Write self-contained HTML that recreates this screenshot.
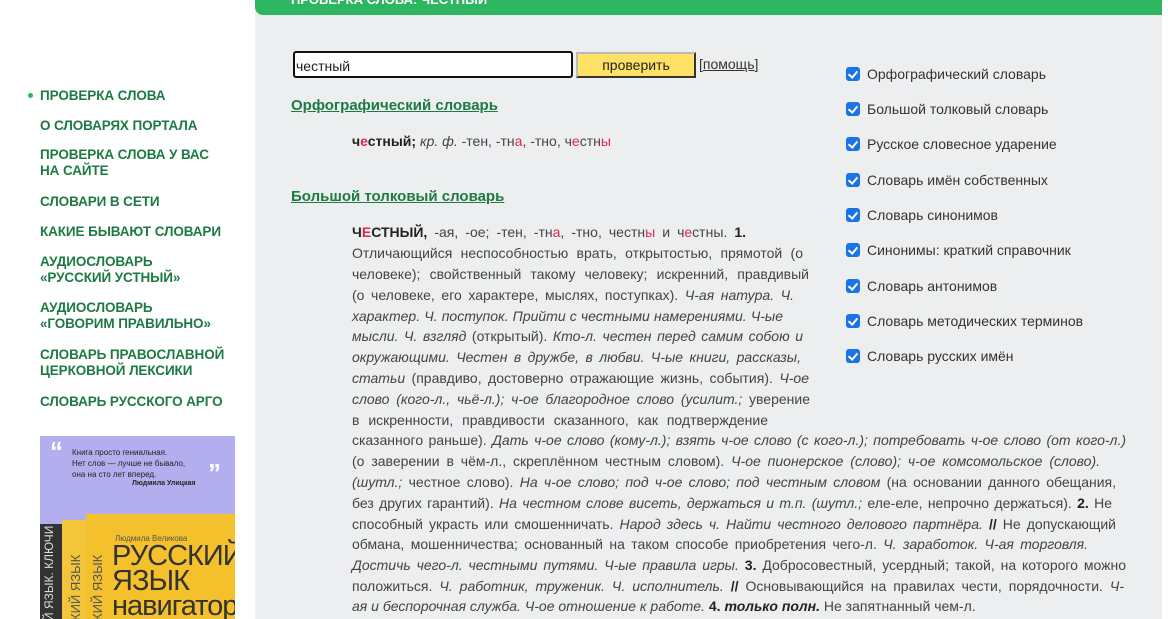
<!DOCTYPE html>
<html><head><meta charset="utf-8">
<style>
*{margin:0;padding:0;box-sizing:border-box}
body{width:1168px;height:619px;overflow:hidden;background:#fff;font-family:"Liberation Sans","DejaVu Sans",sans-serif;position:relative}
.panel{position:absolute;left:255px;top:0;width:907px;height:619px;background:#eceeef}
.bar{position:absolute;left:255px;top:0;width:907px;height:15px;background:#2db55f;border-bottom-left-radius:8px;overflow:hidden}
.bar span{position:absolute;left:36px;top:-8px;color:#fff;font-weight:bold;font-size:13px}
.nav{position:absolute;left:40px;font-weight:bold;font-size:13.5px;color:#1d7a42;line-height:16px;letter-spacing:-0.1px}
.dot{position:absolute;left:28px;top:93px;width:5px;height:5px;border-radius:50%;background:#2db55f}
.inp{position:absolute;left:293px;top:51px;width:280px;height:27px;border:2px solid #111;border-radius:3px;background:#fff;font-size:14px;padding:5px 0 0 1px;color:#222}
.btn{position:absolute;left:576px;top:52px;width:120px;height:26px;background:#ffe166;border:2px solid #333;border-top-color:#bbb;border-left-color:#bbb;font-size:14px;text-align:center;line-height:22px;color:#222}
.help{position:absolute;left:699px;top:56px;font-size:14px;color:#333}
.help u{color:#333}
.h{position:absolute;left:291px;font-weight:bold;font-size:15px;color:#1d7a42;text-decoration:underline}
.t{position:absolute;left:352px;font-size:14px;color:#444;white-space:nowrap;text-align:justify;text-align-last:justify;height:21px;line-height:21px}
.t b{color:#222}
i{font-style:italic}
.r{color:#e0284a}
.cb{position:absolute;left:846px;font-size:14px;color:#333;line-height:16px}
.cb:before{content:"";position:absolute;left:0;top:1px;width:14px;height:14px;background:#1a73e8;border-radius:3px}
.cb:after{content:"";position:absolute;left:4px;top:3px;width:4px;height:7px;border:solid #fff;border-width:0 2px 2px 0;transform:rotate(40deg)}
.cb span{margin-left:21px}
.book{position:absolute;left:40px;top:436px;width:195px;height:183px;background:#b3aeee;overflow:hidden}
</style></head><body>
<div class="panel"></div>
<div class="bar"><span>ПРОВЕРКА СЛОВА: ЧЕСТНЫЙ</span></div>

<div class="dot"></div>
<div class="nav" style="top:88px">ПРОВЕРКА СЛОВА</div>
<div class="nav" style="top:118px">О СЛОВАРЯХ ПОРТАЛА</div>
<div class="nav" style="top:147px">ПРОВЕРКА СЛОВА У ВАС<br>НА САЙТЕ</div>
<div class="nav" style="top:194px">СЛОВАРИ В СЕТИ</div>
<div class="nav" style="top:224px">КАКИЕ БЫВАЮТ СЛОВАРИ</div>
<div class="nav" style="top:254px">АУДИОСЛОВАРЬ<br>«РУССКИЙ УСТНЫЙ»</div>
<div class="nav" style="top:300px">АУДИОСЛОВАРЬ<br>«ГОВОРИМ ПРАВИЛЬНО»</div>
<div class="nav" style="top:347px">СЛОВАРЬ ПРАВОСЛАВНОЙ<br>ЦЕРКОВНОЙ ЛЕКСИКИ</div>
<div class="nav" style="top:394px">СЛОВАРЬ РУССКОГО АРГО</div>

<div class="book">
  <div style="position:absolute;left:10px;top:0px;color:#fff;font-size:26px;font-weight:bold">“</div>
  <div style="position:absolute;left:32px;top:11px;font-size:8px;line-height:11px;color:#222">Книга просто гениальная.<br>Нет слов — лучше не бывало,<br>она на сто лет вперед.</div>
  <div style="position:absolute;left:92px;top:44px;font-size:7px;font-weight:bold;color:#222">Людмила Улицкая</div>
  <div style="position:absolute;left:168px;top:22px;color:#fff;font-size:26px;font-weight:bold">”</div>
  <div style="position:absolute;left:0;top:88px;width:24px;height:100px;background:#333"></div>
  <div style="position:absolute;left:22px;top:84px;width:28px;height:100px;background:#f3c53a"></div>
  <div style="position:absolute;left:46px;top:78px;width:160px;height:110px;background:#f4c02c"></div>
  <div style="position:absolute;left:2px;top:185px;transform:rotate(-90deg);transform-origin:0 0;font-size:12px;color:#ddd;white-space:nowrap">Й ЯЗЫК. КЛЮЧИ</div>
  <div style="position:absolute;left:28px;top:185px;transform:rotate(-90deg);transform-origin:0 0;font-size:13px;color:#555;white-space:nowrap">КИЙ ЯЗЫК</div>
  <div style="position:absolute;left:50px;top:185px;transform:rotate(-90deg);transform-origin:0 0;font-size:13px;color:#555;white-space:nowrap">КИЙ ЯЗЫК</div>
  <div style="position:absolute;left:75px;top:98px;font-size:8px;color:#555">Людмила Великова</div>
  <div style="position:absolute;left:72px;top:108px;font-size:29px;line-height:25px;color:#333;letter-spacing:-1px">РУССКИЙ<br>ЯЗЫК<br>навигатор</div>
</div>

<div class="inp">честный</div>
<div class="btn">проверить</div>
<div class="help">[<u>помощь</u>]</div>

<div class="h" style="top:97px">Орфографический словарь</div>
<div style="position:absolute;left:352px;top:133px;font-size:14px;color:#444"><b style="color:#222">ч<span class="r">е</span>стный;</b> <i>кр. ф.</i> -тен, -тн<span class="r">а</span>, -тно, ч<span class="r">е</span>стн<span class="r">ы</span></div>
<div class="h" style="top:188px">Большой толковый словарь</div>

<div class="t" style="top:222px;width:394px"><b>Ч<span class="r">Е</span>СТНЫЙ,</b> -ая, -ое; -тен, -тн<span class="r">а</span>, -тно, честн<span class="r">ы</span> и ч<span class="r">е</span>стны. <b>1.</b></div>
<div class="t" style="top:243px;width:451px">Отличающийся неспособностью врать, открытостью, прямотой (о</div>
<div class="t" style="top:264px;width:457px">человеке); свойственный такому человеку; искренний, правдивый</div>
<div class="t" style="top:285px;width:442px">(о человеке, его характере, мыслях, поступках). <i>Ч-ая натура. Ч.</i></div>
<div class="t" style="top:306px;width:431px"><i>характер. Ч. поступок. Прийти с честными намерениями. Ч-ые</i></div>
<div class="t" style="top:326px;width:451px"><i>мысли. Ч. взгляд</i> (открытый). <i>Кто-л. честен перед самим собою и</i></div>
<div class="t" style="top:347px;width:449px"><i>окружающими. Честен в дружбе, в любви. Ч-ые книги, рассказы,</i></div>
<div class="t" style="top:368px;width:457px"><i>статьи</i> (правдиво, достоверно отражающие жизнь, события). <i>Ч-ое</i></div>
<div class="t" style="top:389px;width:458px"><i>слово (кого-л., чьё-л.); ч-ое благородное слово (усилит.;</i> уверение</div>
<div class="t" style="top:410px;width:416px">в искренности, правдивости сказанного, как подтверждение</div>
<div class="t" style="top:430px;width:774px">сказанного раньше). <i>Дать ч-ое слово (кому-л.); взять ч-ое слово (с кого-л.); потребовать ч-ое слово (от кого-л.)</i></div>
<div class="t" style="top:451px;width:748px">(о заверении в чём-л., скреплённом честным словом). <i>Ч-ое пионерское (слово); ч-ое комсомольское (слово).</i></div>
<div class="t" style="top:472px;width:764px"><i>(шутл.;</i> честное слово). <i>На ч-ое слово; под ч-ое слово; под честным словом</i> (на основании данного обещания,</div>
<div class="t" style="top:493px;width:760px">без других гарантий). <i>На честном слове висеть, держаться и т.п. (шутл.;</i> еле-еле, непрочно держаться). <b>2.</b> Не</div>
<div class="t" style="top:514px;width:764px">способный украсть или смошенничать. <i>Народ здесь ч. Найти честного делового партнёра.</i> <b>//</b> Не допускающий</div>
<div class="t" style="top:534px;width:736px">обмана, мошенничества; основанный на таком способе приобретения чего-л. <i>Ч. заработок. Ч-ая торговля.</i></div>
<div class="t" style="top:555px;width:774px"><i>Достичь чего-л. честными путями. Ч-ые правила игры.</i> <b>3.</b> Добросовестный, усердный; такой, на которого можно</div>
<div class="t" style="top:576px;width:772px">положиться. <i>Ч. работник, труженик. Ч. исполнитель.</i> <b>//</b> Основывающийся на правилах чести, порядочности. <i>Ч-</i></div>
<div class="t" style="top:596px;text-align-last:left"><i>ая и беспорочная служба. Ч-ое отношение к работе.</i> <b>4. <i>только полн.</i></b> Не запятнанный чем-л.</div>

<div class="cb" style="top:66px"><span>Орфографический словарь</span></div>
<div class="cb" style="top:101px"><span>Большой толковый словарь</span></div>
<div class="cb" style="top:136px"><span>Русское словесное ударение</span></div>
<div class="cb" style="top:172px"><span>Словарь имён собственных</span></div>
<div class="cb" style="top:207px"><span>Словарь синонимов</span></div>
<div class="cb" style="top:242px"><span>Синонимы: краткий справочник</span></div>
<div class="cb" style="top:278px"><span>Словарь антонимов</span></div>
<div class="cb" style="top:313px"><span>Словарь методических терминов</span></div>
<div class="cb" style="top:348px"><span>Словарь русских имён</span></div>
</body></html>
